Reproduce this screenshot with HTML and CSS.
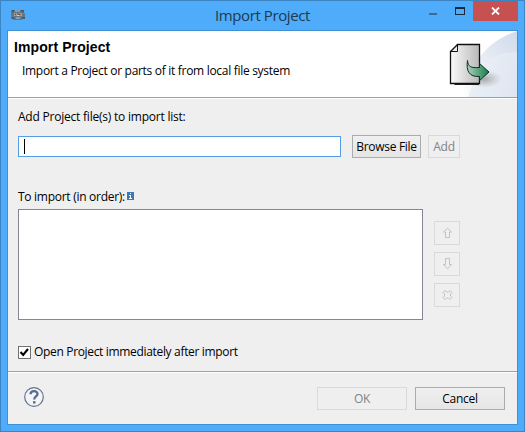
FILE: index.html
```html
<!DOCTYPE html>
<html lang="en">
<head>
<meta charset="utf-8">
<title>Import Project</title>
<link rel="stylesheet" href="styles.css">
</head>
<body>
<div class="window">
  <header class="titlebar">
    <svg class="app-icon" width="16" height="12" viewBox="0 0 16 12" shape-rendering="crispEdges">
      <path d="M1 1h13v3h1v6h-3v1H3v-1H1z" fill="#627889"/>
      <path d="M2 1h2v2H2zM11 1h3v2h-3zM2 8h2v2H2zM12 8h3v2h-3z" fill="#465b6b"/>
      <path d="M5 1h5v2H5zM6 8h4v2H6z" fill="#8b9baa"/>
      <path d="M4 4h3v3H4zM9 4h3v3H9z" fill="#a49c98"/>
      <path d="M5 4h1v2H5zM10 4h1v2h-1z" fill="#d66d32"/>
      <path d="M5 5h1v1H5zM9 5h1v1H9z" fill="#59453b"/>
      <path d="M7 6h2v1H7z" fill="#c5ccd2"/>
    </svg>
    <h1 class="title">Import Project</h1>
    <div class="controls">
      <span class="minimize"></span>
      <span class="maximize"></span>
      <span class="close"><svg width="9" height="8" viewBox="0 0 9 8"><path d="M1 .5 8 7.500M8 .5 1 7.500" stroke="#fff" stroke-width="1.800"/></svg></span>
    </div>
  </header>
  <main class="client">
    <section class="banner">
      <div class="heading">
        <h2>Import Project</h2>
        <p>Import a Project or parts of it from local file system</p>
      </div>
      <svg class="banner-art" width="75" height="66" viewBox="0 0 75 66">
        <defs>
          <linearGradient id="swoosh" x1="0" y1="1" x2="1" y2="0"><stop offset="0" stop-color="#fff"/><stop offset="1" stop-color="#cfdaea"/></linearGradient>
          <linearGradient id="swoosh2" x1="0" y1="0" x2="1" y2="1"><stop offset="0" stop-color="#eef2f8"/><stop offset="1" stop-color="#dbe3ee"/></linearGradient>
          <linearGradient id="paper"><stop offset="0" stop-color="#fafafa"/><stop offset="1" stop-color="#b8b8b8"/></linearGradient>
          <linearGradient id="green"><stop offset="0" stop-color="#a7d3bb"/><stop offset="1" stop-color="#167a49"/></linearGradient>
          <radialGradient id="shade"><stop offset="0" stop-color="#777" stop-opacity=".6"/><stop offset="1" stop-color="#999" stop-opacity="0"/></radialGradient>
        </defs>
        <path d="M75 0C48 9 29 28 20 66H75z" fill="url(#swoosh)"/>
        <path d="M75 21C52 21 35 33 26 66H75z" fill="url(#swoosh2)" opacity=".75"/>
        <ellipse cx="42" cy="48" rx="18" ry="9" fill="url(#shade)"/>
        <path d="M12.500 53.500H37" stroke="#222"/>
        <path d="M15.500 13.500H37.500V52.500H8.500V20.500z" fill="url(#paper)" stroke="#111" stroke-width="1.300"/>
        <path d="M15.500 14V20.500H9z" fill="#eee" stroke="#111"/>
        <path d="M25.500 29.500C26 36 29 37 37.500 36.500V32.500L47 41 37.500 49.500V45.500C27 46 24 40 25.500 29.500z" fill="url(#green)" stroke="#102d20"/>
      </svg>
    </section>
    <section class="form">
      <label class="caption add-label">Add Project file(s) to import list:</label>
      <div class="file-row">
        <div class="field"><span class="caret"></span></div>
        <button class="btn browse"><span>Browse File</span></button>
        <button class="btn add" disabled><span>Add</span></button>
      </div>
      <div class="list-label">
        <span class="caption order-label">To import (in order):</span>
        <svg width="7" height="8" viewBox="0 0 7 8" shape-rendering="crispEdges"><rect width="7" height="8" rx="1" fill="#3d79b4"/><path d="M3 1h1v1H3zM2 3h2v3h1v1H2V6h1V4H2z" fill="#fff"/></svg>
      </div>
      <div class="list-row">
        <div class="list"></div>
        <div class="tools">
          <button class="tool" disabled><svg width="11" height="12" viewBox="0 0 11 12"><path d="M5.500 1.200 9.500 5H7.500V10.500H3.500V5H1.500z"/></svg></button>
          <button class="tool" disabled><svg width="11" height="12" viewBox="0 0 11 12"><path d="M3.500.5H7.500V6.500H9.500L5.500 10.800 1.500 6.500H3.500z"/></svg></button>
          <button class="tool" disabled><svg width="11" height="12" viewBox="0 0 11 12"><path d="M3 1.500 4.500 3H6.500L8 1.500 10 3.500 8.500 5V7L10 8.500 8 10.500 6.500 9H4.500L3 10.500 1 8.500 2.500 7V5L1 3.500z"/></svg></button>
        </div>
      </div>
      <label class="check-row">
        <span class="checkbox"><svg width="11" height="11" viewBox="0 0 11 11"><path d="M1.500 5 4.200 8 9 2" fill="none" stroke="#000" stroke-width="2.100"/></svg></span>
        <span class="caption open-label">Open Project immediately after import</span>
      </label>
    </section>
    <footer class="footer">
      <svg class="help" width="20" height="20" viewBox="0 0 20 20"><circle cx="10" cy="10" r="9.300" fill="#f3f4f5" stroke="#63748f" stroke-width="1.200"/><path d="M6.500 7.300C6.500 3.200 13.500 3.100 13.500 7 13.500 9.500 10.200 9.500 10.200 12.500" fill="none" stroke="#566b8d" stroke-width="2.300"/><path d="M9 14.200h2.500v2.300H9z" fill="#566b8d"/></svg>
      <button class="btn wide ok" disabled><span>OK</span></button>
      <button class="btn wide cancel"><span>Cancel</span></button>
    </footer>
  </main>
</div>
</body>
</html>
```
FILE: styles.css
```css
* { box-sizing: border-box; }
body { margin: 0; font: 12px/16px "Open Sans", "Noto Sans", sans-serif; color: #000; }
h1, h2, p { margin: 0; font-weight: 400; white-space: nowrap; }
svg { display: block; flex: none; }
button { padding: 0; font: inherit; color: inherit; }
.window { width: 525px; height: 432px; padding: 0 6px 6px; border: 1px solid #3d84c3; background: #4eacfa; }
.titlebar { display: grid; grid-template-columns: 200px 1fr 200px; height: 29px; }
.app-icon { margin: 8px 0 0 3px; }
.title { padding-top: 3px; font-size: 15px; line-height: 22px; text-align: center; color: #20394d; letter-spacing: -.4px; }
.controls { display: flex; justify-content: flex-end; }
.minimize { width: 8px; height: 2px; margin: 12px 18px 0 0; background: #3b6a94; }
.maximize { width: 10px; height: 8px; margin: 6px 8px 0 0; border: 1px solid #172b3a; border-top-width: 2px; }
.close { display: flex; align-items: center; justify-content: center; width: 45px; height: 20px; background: #c75050; }
.client { display: flex; flex-direction: column; height: 395px; border: 1px solid #4090d5; background: #efefef; }
.banner { display: flex; justify-content: space-between; height: 68px; border-bottom: 1px solid #fff; background: linear-gradient(#a0a0a0, #a0a0a0) 0 66px / 100% 1px no-repeat #fff; }
.heading { padding: 8px 0 0 6px; }
.heading h2 { font: bold 14px/16px "Liberation Sans", sans-serif; letter-spacing: .1px; }
.heading p { margin: 8px 0 0 8px; letter-spacing: -.3px; }
.form { height: 272px; padding: 10px 0 0 10px; }
.caption { display: block; white-space: nowrap; letter-spacing: -.22px; }
.order-label { letter-spacing: -.28px; }
.open-label { letter-spacing: -.33px; }
.file-row { display: flex; align-items: center; height: 23px; margin-top: 10px; }
.field { width: 323px; height: 21px; padding: 2px 5px; border: 1px solid #569de5; background: #fff; }
.caret { display: block; width: 1px; height: 15px; background: #000; }
.btn { display: flex; align-items: center; justify-content: center; height: 23px; border: 1px solid #acacac; background: linear-gradient(#f0f0f0, #e5e5e5); white-space: nowrap; letter-spacing: -.3px; }
.btn:disabled { border-color: #d9d9d9; background: #efefef; color: #838383; }
.browse { width: 69px; margin-left: 11px; }
.add { width: 32px; margin-left: 7px; }
.list-label { display: flex; align-items: center; gap: 2px; margin-top: 31px; height: 16px; }
.list-label svg { margin-top: -2px; }
.list-row { display: flex; gap: 11px; margin-top: 4px; }
.list { width: 405px; height: 111px; border: 1px solid #828790; background: #fff; }
.tools { display: flex; flex-direction: column; gap: 7px; padding-top: 12px; }
.tool { display: flex; align-items: center; justify-content: center; width: 26px; height: 24px; border: 1px solid #d9d9d9; background: #efefef; }
.tool path { fill: none; stroke: #c2c2c2; }
.check-row { display: flex; align-items: center; gap: 3px; margin-top: 24px; height: 16px; }
.checkbox { width: 13px; height: 13px; border: 1px solid #707070; background: #fff; }
.footer { display: flex; flex: 1; padding: 14px 12px 0 16px; border-top: 1px solid #a0a0a0; box-shadow: inset 0 1px #fff; }
.footer .btn { margin-top: 1px; }
.help { margin-top: 1px; }
.wide { width: 90px; }
.ok { margin-left: auto; }
.cancel { margin-left: 8px; }
```
